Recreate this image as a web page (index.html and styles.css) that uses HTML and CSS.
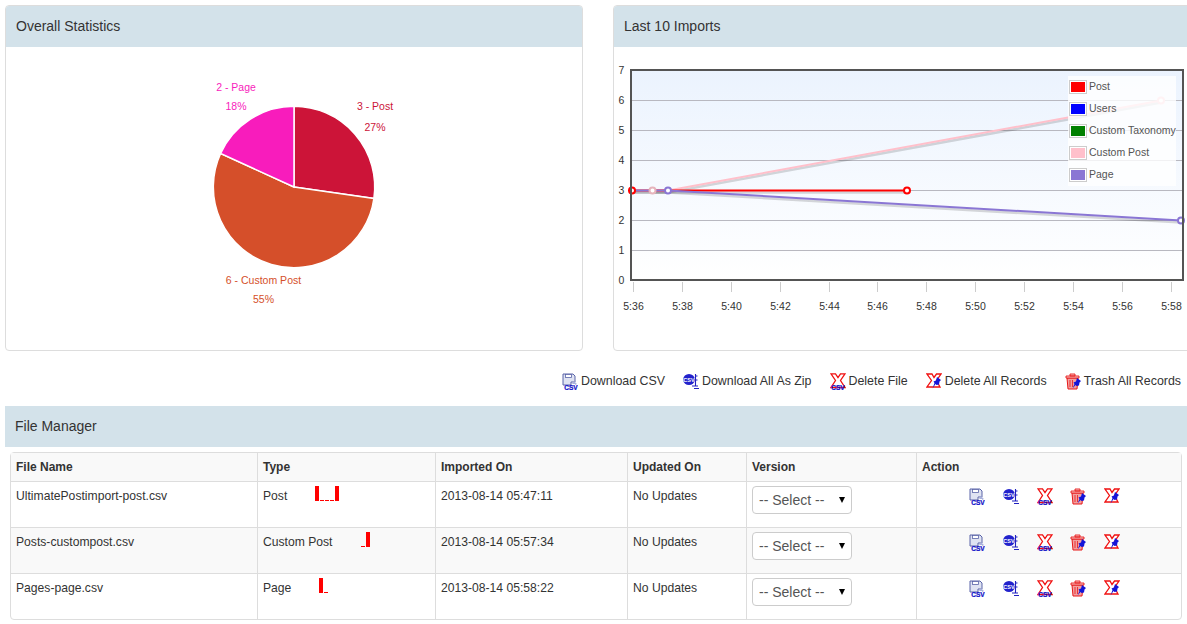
FILE: index.html
```html
<!DOCTYPE html>
<html lang="en">
<head>
  <meta charset="UTF-8" />
  <meta name="viewport" content="width=device-width, initial-scale=1.0"/>
  <title>File Manager</title>
  <link rel="stylesheet" href="styles.css">
</head>
<body>

<!-- shared icons -->
<svg class="defs">
  <symbol id="ico-csv" viewBox="0 0 16 17">
    <path d="M1 1h10l2 2v6H9v3H1z" fill="#dfe3f2" stroke="#5a64a8"/>
    <rect x="3.500" y="1.500" width="6" height="3" fill="#fff" stroke="#5a64a8" stroke-width=".8"/>
    <path d="M12 8l3 3-2 1v-1h-3z" fill="#aab2dc"/>
    <text class="ico-txt" x="9" y="16.500">CSV</text>
  </symbol>
  <symbol id="ico-zip" viewBox="0 0 16 17">
    <ellipse cx="6" cy="6.500" rx="5.800" ry="5.500" fill="#2222cc"/>
    <text class="ico-txt ico-txt-w" x="6" y="9">CSV</text>
    <path d="M12.500 1v12M12.500 3h2M12.500 7h2M9 13h6M11 15.500h5" stroke="#2020c0" stroke-width="1.100" fill="none"/>
  </symbol>
  <symbol id="ico-del" viewBox="0 0 16 17">
    <path d="M1 .8h4.500L8 4.500 10.500 .8H15l-4.500 6.700L15 14.500H1l4.500-7z" fill="#fff" stroke="#f01010" stroke-width="1.300"/>
    <text class="ico-txt" x="8" y="16.500">CSV</text>
  </symbol>
  <symbol id="ico-delrec" viewBox="0 0 16 17">
    <path d="M1 1h5l2 3.500L10.500 1H15l-4.500 6.500L14 14H1l4.500-6.500z" fill="#fff" stroke="#f01010" stroke-width="1.300"/>
    <path d="M11 4l4 3-1.500 1.500-.5 3-2.500.5-1-1-3 4.500 2-5.500-1-1.500 2.500-1z" fill="#1414d8"/>
  </symbol>
  <symbol id="ico-trash" viewBox="0 0 16 17">
    <path d="M2 5h11l-1 11H3z" fill="#f2a0a0" stroke="#e81818"/>
    <path d="M1 3h13v2H1zM5 1h5v2H5z" fill="#f8c8c8" stroke="#e81818" stroke-width=".9"/>
    <path d="M5 7v7M7.500 7v7" stroke="#e81818" stroke-width=".8"/>
    <path d="M12 5l4 3-1.500 1.500-.5 3-2.500.5-1-1-3 3.500 2-4.500-1-1.500 2.500-1z" fill="#1414d8"/>
  </symbol>
</svg>

<div class="page">

  <div class="top-row">
    <div class="panel">
      <div class="panel-head">Overall Statistics</div>
      <svg class="chart" width="576" height="303" viewBox="6 47 576 303">
        <g stroke="#fff" stroke-width="1.500">
          <path d="M294 187V106.300A80.700 80.700 0 0 1 373.900 198.500z" fill="#cc1438"/>
          <path d="M294 187L373.900 198.500A80.700 80.700 0 1 1 220.600 153.500z" fill="#d54f2a"/>
          <path d="M294 187L220.600 153.500A80.700 80.700 0 0 1 294 106.300z" fill="#f81cbc"/>
        </g>
        <g class="pie-label">
          <text x="236" y="91" fill="#f81cbc">2 - Page</text>
          <text x="236" y="110" fill="#f81cbc">18%</text>
          <text x="375" y="110" fill="#cc1438">3 - Post</text>
          <text x="375" y="131" fill="#cc1438">27%</text>
          <text x="263.500" y="284" fill="#d54f2a">6 - Custom Post</text>
          <text x="263.500" y="303" fill="#d54f2a">55%</text>
        </g>
      </svg>
    </div>

    <div class="panel">
      <div class="panel-head">Last 10 Imports</div>
      <svg class="chart" width="576" height="303" viewBox="614 47 576 303">
        <defs>
          <linearGradient id="plot-bg" x1="0" y1="0" x2="0" y2="1">
            <stop offset="0" stop-color="#ebf3fe"/>
            <stop offset="1" stop-color="#ffffff"/>
          </linearGradient>
        </defs>
        <rect x="631" y="70" width="552" height="210" fill="url(#plot-bg)"/>
        <path class="grid" d="M632 100.500H1182M632 130.500H1182M632 160.500H1182M632 190.500H1182M632 220.500H1182M632 250.500H1182"/>
        <path class="ticks" d="M633.500 282v10M682.500 282v10M731.500 282v10M780.500 282v10M829.500 282v10M877.500 282v10M926.500 282v10M975.500 282v10M1024.500 282v10M1073.500 282v10M1122.500 282v10M1171.500 282v10"/>
        <g class="axis-y">
          <text x="621.500" y="74">7</text>
          <text x="621.500" y="104">6</text>
          <text x="621.500" y="134">5</text>
          <text x="621.500" y="164">4</text>
          <text x="621.500" y="194">3</text>
          <text x="621.500" y="224">2</text>
          <text x="621.500" y="254">1</text>
          <text x="621.500" y="284">0</text>
        </g>
        <g class="axis-x">
          <text x="633.500" y="310">5:36</text>
          <text x="682.500" y="310">5:38</text>
          <text x="731.500" y="310">5:40</text>
          <text x="780.500" y="310">5:42</text>
          <text x="829.500" y="310">5:44</text>
          <text x="877.500" y="310">5:46</text>
          <text x="926.500" y="310">5:48</text>
          <text x="975.500" y="310">5:50</text>
          <text x="1024.500" y="310">5:52</text>
          <text x="1073.500" y="310">5:54</text>
          <text x="1122.500" y="310">5:56</text>
          <text x="1171.500" y="310">5:58</text>
        </g>
        <!-- line shadows -->
        <g class="shadow">
          <path d="M652.500 192.500L668 192.500L1161 102.500"/>
          <path d="M632 192.500H907"/>
          <path d="M632 192.500H668L1181 222.500"/>
        </g>
        <g class="series">
          <path stroke="#ffc0cb" d="M652.500 190.500L668 190.500L1161 100.500"/>
          <path stroke="#ff0000" d="M632 190.500H907"/>
          <path stroke="#8a76d4" d="M632 190.500H668L1181 220.500"/>
          <circle stroke="#ff0000" cx="632" cy="190.500" r="3"/>
          <circle stroke="#ff0000" cx="907" cy="190.500" r="3"/>
          <circle stroke="#e6b4bc" cx="652.500" cy="190.500" r="3"/>
          <circle stroke="#ffc0cb" cx="1161" cy="100.500" r="3"/>
          <circle stroke="#8a76d4" cx="668" cy="190.500" r="3"/>
          <circle stroke="#8a76d4" cx="1181" cy="220.500" r="3"/>
        </g>
        <rect class="frame" x="631" y="70" width="552" height="210"/>
        <rect x="1068" y="76" width="108" height="110" fill="#fff" fill-opacity=".8"/>
        <g class="legend-box">
          <rect x="1069.500" y="80.500" width="17" height="13"/>
          <rect x="1069.500" y="102.500" width="17" height="13"/>
          <rect x="1069.500" y="124.500" width="17" height="13"/>
          <rect x="1069.500" y="146.500" width="17" height="13"/>
          <rect x="1069.500" y="168.500" width="17" height="13"/>
        </g>
        <rect x="1071" y="82" width="14" height="10" fill="#ff0000"/>
        <rect x="1071" y="104" width="14" height="10" fill="#0000ff"/>
        <rect x="1071" y="126" width="14" height="10" fill="#008000"/>
        <rect x="1071" y="148" width="14" height="10" fill="#ffc0cb"/>
        <rect x="1071" y="170" width="14" height="10" fill="#8a76d4"/>
        <g class="legend-text">
          <text x="1089" y="90">Post</text>
          <text x="1089" y="112">Users</text>
          <text x="1089" y="134">Custom Taxonomy</text>
          <text x="1089" y="156">Custom Post</text>
          <text x="1089" y="178">Page</text>
        </g>
      </svg>
    </div>
  </div>

  <div class="toolbar">
    <a class="tool"><svg class="ico"><use href="#ico-csv"/></svg>Download CSV</a>
    <a class="tool"><svg class="ico"><use href="#ico-zip"/></svg>Download All As Zip</a>
    <a class="tool"><svg class="ico"><use href="#ico-del"/></svg>Delete File</a>
    <a class="tool"><svg class="ico"><use href="#ico-delrec"/></svg>Delete All Records</a>
    <a class="tool"><svg class="ico"><use href="#ico-trash"/></svg>Trash All Records</a>
  </div>

  <div class="manager">
    <div class="manager-head">File Manager</div>
    <table class="files">
      <thead>
        <tr>
          <th class="col-name">File Name</th>
          <th class="col-type">Type</th>
          <th class="col-imported">Imported On</th>
          <th class="col-updated">Updated On</th>
          <th class="col-version">Version</th>
          <th class="col-action">Action</th>
        </tr>
      </thead>
      <tbody>
        <tr>
          <td>UltimatePostimport-post.csv</td>
          <td>Post<span class="spark"><i class="hi"></i><i></i><i></i><i></i><i class="hi"></i></span></td>
          <td>2013-08-14 05:47:11</td>
          <td>No Updates</td>
          <td><div class="select-wrap"><select class="version"><option>-- Select --</option></select></div></td>
          <td>
            <div class="actions">
              <svg class="ico"><use href="#ico-csv"/></svg>
              <svg class="ico"><use href="#ico-zip"/></svg>
              <svg class="ico"><use href="#ico-del"/></svg>
              <svg class="ico"><use href="#ico-trash"/></svg>
              <svg class="ico"><use href="#ico-delrec"/></svg>
            </div>
          </td>
        </tr>
        <tr>
          <td>Posts-custompost.csv</td>
          <td>Custom Post<span class="spark"><i></i><i class="hi"></i></span></td>
          <td>2013-08-14 05:57:34</td>
          <td>No Updates</td>
          <td><div class="select-wrap"><select class="version"><option>-- Select --</option></select></div></td>
          <td>
            <div class="actions">
              <svg class="ico"><use href="#ico-csv"/></svg>
              <svg class="ico"><use href="#ico-zip"/></svg>
              <svg class="ico"><use href="#ico-del"/></svg>
              <svg class="ico"><use href="#ico-trash"/></svg>
              <svg class="ico"><use href="#ico-delrec"/></svg>
            </div>
          </td>
        </tr>
        <tr>
          <td>Pages-page.csv</td>
          <td>Page<span class="spark"><i class="hi"></i><i></i></span></td>
          <td>2013-08-14 05:58:22</td>
          <td>No Updates</td>
          <td><div class="select-wrap"><select class="version"><option>-- Select --</option></select></div></td>
          <td>
            <div class="actions">
              <svg class="ico"><use href="#ico-csv"/></svg>
              <svg class="ico"><use href="#ico-zip"/></svg>
              <svg class="ico"><use href="#ico-del"/></svg>
              <svg class="ico"><use href="#ico-trash"/></svg>
              <svg class="ico"><use href="#ico-delrec"/></svg>
            </div>
          </td>
        </tr>
      </tbody>
    </table>
  </div>

</div>

</body>
</html>
```

FILE: styles.css
```css
html, body {
  margin: 0;
  height: 100%;
  overflow: hidden;
}

body {
  font-family: "Liberation Sans", Arial, sans-serif;
  font-size: 12px;
  color: #333;
  background-color: #fff;
}

.defs {
  display: none;
}

.page {
  width: 1187px;
  padding: 5px 0 0 5px;
  box-sizing: border-box;
  overflow: hidden;
}

.top-row {
  display: flex;
  gap: 30px;
  width: 1200px;
}

.panel {
  flex: 0 0 578px;
  height: 346px;
  box-sizing: border-box;
  border: 1px solid #ddd;
  border-radius: 4px;
  overflow: hidden;
}

.panel-head {
  height: 41px;
  line-height: 40px;
  padding-left: 10px;
  font-size: 14px;
  background-color: #d3e2ea;
}

.chart {
  display: block;
}

.pie-label text {
  font-size: 10.5px;
  text-anchor: middle;
}

.grid {
  stroke: #b8b8c0;
  stroke-width: 1;
  fill: none;
}

.ticks {
  stroke: #ccc;
  stroke-width: 1;
  fill: none;
}

.axis-y text,
.axis-x text {
  font-size: 10.5px;
  fill: #333;
  text-anchor: middle;
}

.shadow path {
  fill: none;
  stroke: rgba(0, 0, 0, 0.15);
  stroke-width: 2.5;
}

.series path {
  fill: none;
  stroke-width: 2;
}

.series circle {
  fill: #fff;
  stroke-width: 2;
}

.frame {
  fill: none;
  stroke: #545454;
  stroke-width: 2;
}

.legend-box rect {
  fill: #fff;
  stroke: #ccc;
  stroke-width: 1;
}

.legend-text text {
  font-size: 10.5px;
  fill: #545454;
}

.toolbar {
  display: flex;
  justify-content: flex-end;
  align-items: center;
  gap: 18px;
  height: 55px;
  box-sizing: border-box;
  padding: 5px 6px 0 0;
  font-size: 12.4px;
}

.tool {
  display: flex;
  align-items: center;
  gap: 3px;
}

.ico {
  width: 16px;
  height: 17px;
  flex: none;
}

.ico-txt {
  font-family: "Liberation Sans", Arial, sans-serif;
  font-size: 6.5px;
  font-weight: bold;
  fill: #1212c8;
  stroke: #1212c8;
  stroke-width: 0.25;
  text-anchor: middle;
}

.ico-txt-w {
  fill: #fff;
  stroke: none;
  font-size: 5.5px;
}

.manager-head {
  height: 41px;
  line-height: 40px;
  padding-left: 10px;
  font-size: 14px;
  background-color: #d3e2ea;
}

.files {
  table-layout: fixed;
  width: 1172px;
  margin: 5px;
  border: 1px solid #ddd;
  border-radius: 4px;
  border-collapse: separate;
  border-spacing: 0;
}

.files th {
  height: 28px;
  padding: 0 5px;
  text-align: left;
  font-size: 12px;
  background-color: #f9f9f9;
  border-left: 1px solid #ddd;
}

.files td {
  height: 46px;
  box-sizing: border-box;
  padding: 4px 5px;
  font-size: 12.15px;
  line-height: 20px;
  vertical-align: top;
  border-top: 1px solid #ddd;
  border-left: 1px solid #ddd;
}

.files th:first-child,
.files td:first-child {
  border-left: none;
}

.files tbody tr:nth-child(even) td {
  background-color: #f9f9f9;
}

.col-name { width: 236px; }
.col-type { width: 167px; }
.col-imported { width: 181px; }
.col-updated { width: 108px; }
.col-version { width: 159px; }

.spark {
  display: inline-flex;
  align-items: flex-end;
  gap: 1px;
  height: 15px;
  margin-left: 28px;
  vertical-align: top;
}

.spark i {
  display: block;
  width: 4px;
  height: 1px;
  background-color: #f00;
}

.spark i.hi {
  height: 15px;
}

.select-wrap {
  position: relative;
  width: 100px;
}

/* small black arrow, the select's own one is hidden */
.select-wrap::after {
  content: "";
  position: absolute;
  left: 87px;
  top: 11px;
  border-left: 3.5px solid transparent;
  border-right: 3.5px solid transparent;
  border-top: 6px solid #000;
  pointer-events: none;
}

.version {
  display: block;
  width: 100px;
  height: 28px;
  padding: 4px 6px;
  appearance: none;
  font-family: "Liberation Sans", Arial, sans-serif;
  font-size: 14px;
  color: #555;
  background-color: #fff;
  border: 1px solid #ccc;
  border-radius: 4px;
}

.actions {
  display: flex;
  gap: 17.75px;
  padding: 2px 0 0 47px;
}
```
